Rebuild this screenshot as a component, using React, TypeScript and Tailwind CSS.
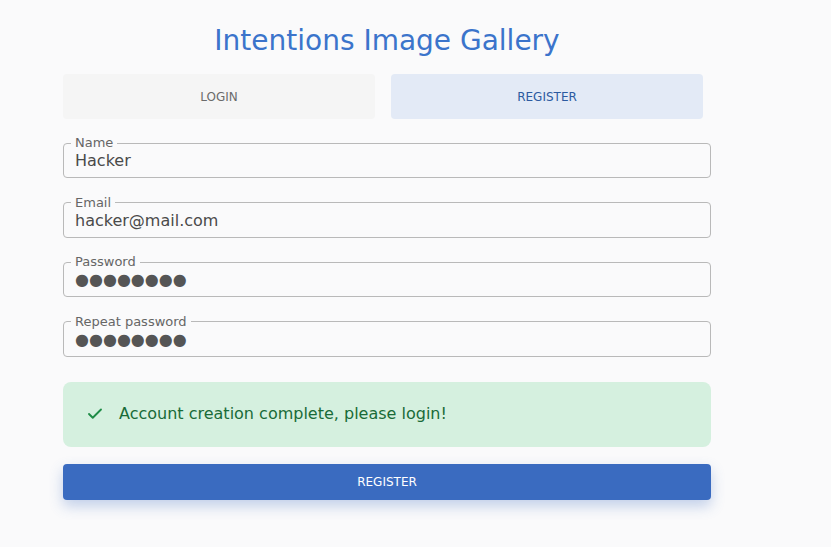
import React, { useState } from "react";
import { Check } from "lucide-react";

const font = { fontFamily: '"DejaVu Sans", sans-serif' };

function Field({ label, value, secret = false }: { label: string; value: string; secret?: boolean }) {
  const [val, setVal] = useState(value);
  const shown = secret ? "●".repeat(val.length) : val;
  return (
    <fieldset className="border border-[#b9b9b9] rounded-[4px] px-[7px] pb-[6px] m-0">
      <legend className="px-1 text-[13px] leading-[16px] text-[#666666]">{label}</legend>
      <input
        type="text"
        value={shown}
        onChange={e => !secret && setVal(e.target.value)}
        className={`block w-full h-[20px] px-1 text-[16px] leading-[20px] bg-transparent outline-none ${secret ? "text-[#555555]" : "text-[#4a4a4a]"}`}
        style={font}
      />
    </fieldset>
  );
}

export default function App() {
  const [tab, setTab] = useState("register");

  return (
    <div className="min-h-[547px] bg-[#fafafb]" style={font}>
      <div className="w-[648px] ml-[63px] pt-[24px]">
        <h1 className="text-center text-[28px] leading-[34px] text-[#3b74cb]">Intentions Image Gallery</h1>

        <div className="mt-[16px] flex gap-4 w-[640px]">
          <button
            type="button"
            onClick={() => setTab("login")}
            className={`flex-1 h-[45px] rounded-[4px] text-[12px] uppercase ${tab === "login" ? "bg-[#e3eaf6] text-[#2c5aa0]" : "bg-[#f5f5f5] text-[#6b6b6b]"}`}
          >
            Login
          </button>
          <button
            type="button"
            onClick={() => setTab("register")}
            className={`flex-1 h-[45px] rounded-[4px] text-[12px] uppercase ${tab === "register" ? "bg-[#e3eaf6] text-[#2c5aa0]" : "bg-[#f5f5f5] text-[#6b6b6b]"}`}
          >
            Register
          </button>
        </div>

        <div className="mt-[16px] flex flex-col gap-[16.6px]">
          <Field label="Name" value="Hacker" />
          <Field label="Email" value="hacker@mail.com" />
          <Field label="Password" value="password" secret />
          <Field label="Repeat password" value="password" secret />
        </div>

        <div className="mt-[25px] h-[65px] rounded-[8px] bg-[#d5f0df] flex items-center pl-[23px] gap-[15px]">
          <Check size={18} strokeWidth={2.5} className="text-[#1f8c47]" />
          <span className="text-[16px] text-[#196b38]">Account creation complete, please login!</span>
        </div>

        <button
          type="button"
          className="mt-[17px] w-full h-[36px] rounded-[4px] bg-[#3a6bc0] text-white text-[12px] uppercase shadow-[0_6px_14px_rgba(58,107,192,0.3)]"
        >
          Register
        </button>
      </div>
    </div>
  );
}
